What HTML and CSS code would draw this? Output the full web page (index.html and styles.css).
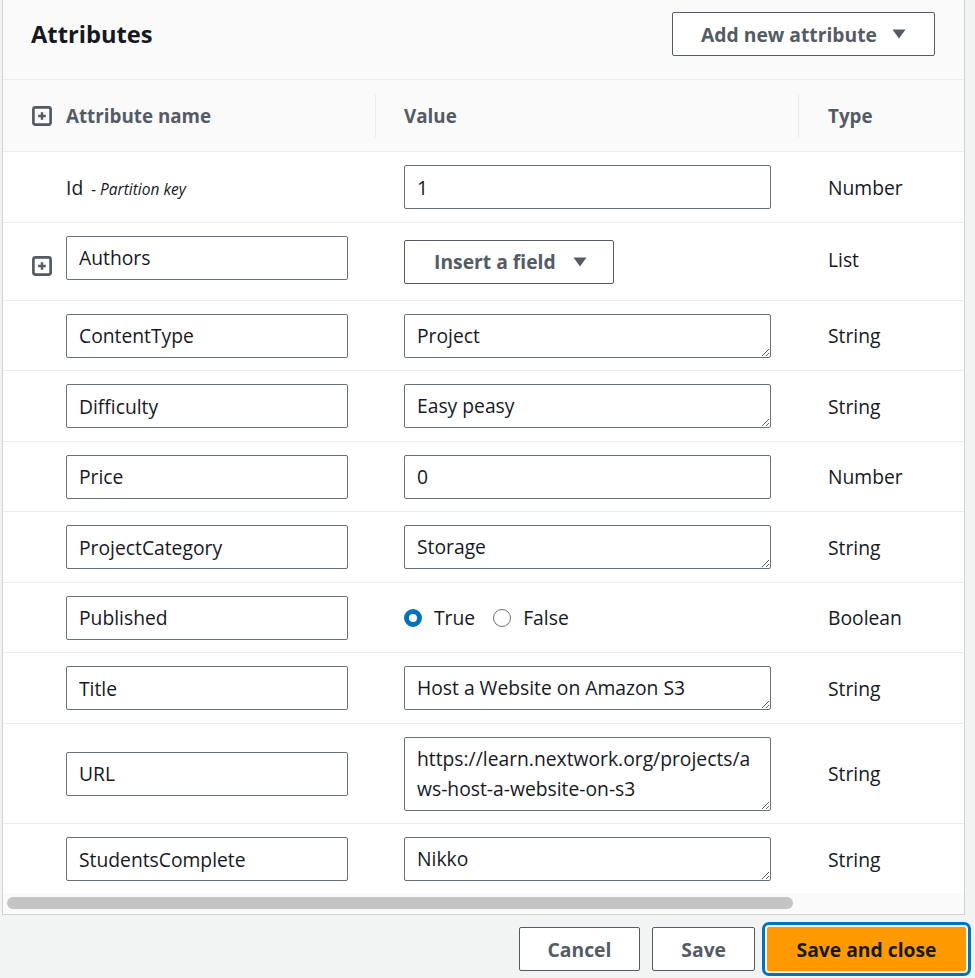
FILE: index.html
```html
<!DOCTYPE html>
<html lang="en">
<head>
<meta charset="utf-8">
<title>Attributes</title>
<link rel="stylesheet" href="styles.css">
</head>
<body>
<div class="page">
  <section class="panel">
    <header class="panel-head">
      <h2 class="panel-title">Attributes</h2>
      <button class="btn btn-dd btn-add" type="button"><span>Add new attribute</span><svg class="caret" width="14" height="10" viewBox="0 0 14 10"><path d="M0.5 0.5h13L7 9.5z" fill="#545b64"/></svg></button>
    </header>

    <div class="table">
      <div class="row row-head">
        <div class="cell cell-icon"><svg class="plus" width="20" height="20" viewBox="0 0 20 20"><rect x="1.4" y="1.4" width="17.2" height="17.2" rx="2" fill="none" stroke="#545b64" stroke-width="2.7"/><path d="M10 6.2v7.6M6.2 10h7.6" stroke="#545b64" stroke-width="2.4"/></svg></div>
        <div class="cell th">Attribute name</div>
        <div class="cell th th-sep">Value</div>
        <div class="cell th th-sep th-type">Type</div>
      </div>

      <div class="row">
        <div class="cell cell-icon"></div>
        <div class="cell key-name">Id <em class="key-note">- Partition key</em></div>
        <div class="cell cell-value"><input class="field field-value" type="text" value="1"></div>
        <div class="cell cell-type">Number</div>
      </div>

      <div class="row row-list">
        <div class="cell cell-icon icon-low"><svg class="plus" width="20" height="20" viewBox="0 0 20 20"><rect x="1.4" y="1.4" width="17.2" height="17.2" rx="2" fill="none" stroke="#545b64" stroke-width="2.7"/><path d="M10 6.2v7.6M6.2 10h7.6" stroke="#545b64" stroke-width="2.4"/></svg></div>
        <div class="cell"><input class="field field-name" type="text" value="Authors"></div>
        <div class="cell cell-value"><button class="btn btn-dd btn-insert" type="button"><span>Insert a field</span><svg class="caret" width="14" height="10" viewBox="0 0 14 10"><path d="M0.5 0.5h13L7 9.5z" fill="#545b64"/></svg></button></div>
        <div class="cell cell-type type-mid">List</div>
      </div>

      <div class="row">
        <div class="cell cell-icon"></div>
        <div class="cell"><input class="field field-name" type="text" value="ContentType"></div>
        <div class="cell cell-value"><textarea class="field field-value area" rows="1">Project</textarea></div>
        <div class="cell cell-type">String</div>
      </div>

      <div class="row">
        <div class="cell cell-icon"></div>
        <div class="cell"><input class="field field-name" type="text" value="Difficulty"></div>
        <div class="cell cell-value"><textarea class="field field-value area" rows="1">Easy peasy</textarea></div>
        <div class="cell cell-type">String</div>
      </div>

      <div class="row">
        <div class="cell cell-icon"></div>
        <div class="cell"><input class="field field-name" type="text" value="Price"></div>
        <div class="cell cell-value"><input class="field field-value" type="text" value="0"></div>
        <div class="cell cell-type">Number</div>
      </div>

      <div class="row">
        <div class="cell cell-icon"></div>
        <div class="cell"><input class="field field-name" type="text" value="ProjectCategory"></div>
        <div class="cell cell-value"><textarea class="field field-value area" rows="1">Storage</textarea></div>
        <div class="cell cell-type">String</div>
      </div>

      <div class="row">
        <div class="cell cell-icon"></div>
        <div class="cell"><input class="field field-name" type="text" value="Published"></div>
        <div class="cell cell-value radios">
          <span class="radio radio-on"></span><span class="radio-label">True</span>
          <span class="radio"></span><span class="radio-label">False</span>
        </div>
        <div class="cell cell-type">Boolean</div>
      </div>

      <div class="row">
        <div class="cell cell-icon"></div>
        <div class="cell"><input class="field field-name" type="text" value="Title"></div>
        <div class="cell cell-value"><textarea class="field field-value area" rows="1">Host a Website on Amazon S3</textarea></div>
        <div class="cell cell-type">String</div>
      </div>

      <div class="row">
        <div class="cell cell-icon"></div>
        <div class="cell"><input class="field field-name" type="text" value="URL"></div>
        <div class="cell cell-value"><textarea class="field field-value area area-2" rows="2">https://learn.nextwork.org/projects/a
ws-host-a-website-on-s3</textarea></div>
        <div class="cell cell-type">String</div>
      </div>

      <div class="row row-last">
        <div class="cell cell-icon"></div>
        <div class="cell"><input class="field field-name" type="text" value="StudentsComplete"></div>
        <div class="cell cell-value"><textarea class="field field-value area" rows="1">Nikko</textarea></div>
        <div class="cell cell-type">String</div>
      </div>
    </div>

    <div class="hscroll"><div class="hscroll-thumb"></div></div>
  </section>

  <footer class="actions">
    <button class="btn btn-normal" type="button">Cancel</button>
    <button class="btn btn-normal" type="button">Save</button>
    <button class="btn btn-primary" type="button">Save and close</button>
  </footer>
</div>
</body>
</html>
```

FILE: styles.css
```css
* {
  box-sizing: border-box;
}

html, body {
  margin: 0;
  padding: 0;
}

body {
  background: #f2f3f3;
  font-family: "Open Sans", "Noto Sans", sans-serif;
  font-size: 19.3px;
  color: #16191f;
}

.page {
  width: 975px;
  height: 978px;
  overflow: hidden;
}

.panel {
  margin-left: 2px;
  width: 963px;
  background: #fff;
  border: 1px solid #cfd3d3;
  border-top: 0;
}

.panel-head {
  height: 80px;
  display: flex;
  align-items: center;
  justify-content: space-between;
  padding: 12px 29px 23px 28px;
  background: #fafafa;
  border-bottom: 1px solid #eaeded;
}

.panel-title {
  margin: 0;
  font-size: 23.7px;
  font-weight: 700;
  line-height: 30px;
  color: #16191f;
}

.btn {
  height: 44px;
  display: inline-flex;
  align-items: center;
  justify-content: center;
  flex: none;
  white-space: nowrap;
  border: 1px solid #545b64;
  border-radius: 2px;
  background: #fff;
  color: #545b64;
  font-family: inherit;
  font-size: 19.3px;
  font-weight: 700;
  padding: 0 28px;
  margin: 0;
  cursor: pointer;
}

.btn-dd {
  gap: 15px;
}

.btn-insert {
  padding: 0 26px 0 29px;
  gap: 17px;
  margin-top: 4px;
}

.caret {
  display: block;
  flex: none;
}

.row {
  display: grid;
  grid-template-columns: 63px 309px 423px 1fr;
  align-items: center;
  padding: 13px 0 12.5px;
  border-bottom: 1px solid #eaeded;
}

.row-head {
  height: 72px;
  padding: 0;
  background: #fafafa;
}

.row-list {
  align-items: start;
  padding-bottom: 16px;
}

.row-last {
  border-bottom: 0;
  padding-bottom: 12px;
}

.cell {
  min-width: 0;
  white-space: nowrap;
}

.cell-icon {
  display: flex;
  padding-left: 29px;
}

.icon-low {
  padding-top: 20px;
}

.plus {
  display: block;
}

.th {
  font-size: 18.8px;
  font-weight: 700;
  color: #545b64;
}

.th-sep {
  height: 44px;
  display: flex;
  align-items: center;
  border-left: 1px solid #eaeded;
  padding-left: 28px;
}

.th-type {
  padding-left: 29px;
}

.key-name {
  font-size: 19.3px;
}

.key-note {
  font-size: 15.5px;
  margin-left: 3px;
}

.cell-value {
  padding-left: 29px;
}

.cell-type {
  padding-left: 30px;
}

.type-mid {
  align-self: center;
}

.field {
  display: block;
  height: 44px;
  border: 1px solid #687078;
  border-radius: 2px;
  background: #fff;
  color: #16191f;
  font-family: inherit;
  font-size: 19.3px;
  padding: 0 12px;
  margin: 0;
  outline: none;
}

.field-name {
  width: 282px;
}

.field-value {
  width: 367px;
}

.area {
  padding: 6px 12px;
  line-height: 30px;
  resize: vertical;
  overflow: hidden;
  white-space: pre;
}

.area-2 {
  height: 74px;
}

.radios {
  display: flex;
  align-items: center;
  height: 44px;
}

.radio {
  width: 18px;
  height: 18px;
  border-radius: 50%;
  border: 1.5px solid #687078;
  background: #fff;
  flex: none;
}

.radio-on {
  border: 5.5px solid #0073bb;
}

.radio-label {
  margin-left: 12px;
  margin-right: 18px;
}

.hscroll {
  height: 21px;
  padding: 4px 0 5px 4px;
  background: #fafafa;
}

.hscroll-thumb {
  width: 786px;
  height: 12px;
  border-radius: 6px;
  background: #c4c4c4;
}

.actions {
  display: flex;
  justify-content: flex-end;
  gap: 12px;
  padding: 12px 9px 0 0;
}

.btn-normal {
  padding: 0 28px;
}

.btn-primary {
  width: 199px;
  background: #ff9900;
  border-color: #ff9900;
  color: #16191f;
  outline: 3px solid #0073bb;
  outline-offset: 2px;
  padding: 0;
}
```
